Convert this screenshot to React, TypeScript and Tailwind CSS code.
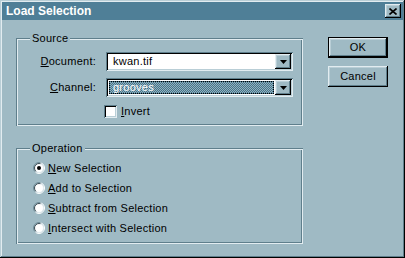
import React from 'react';

const raised =
  'shadow-[inset_-1px_-1px_0_#000,inset_1px_1px_0_#e2ecf0,inset_-2px_-2px_0_#5f7f8c,inset_2px_2px_0_#b9ced6]';
const sunken =
  'shadow-[inset_1px_1px_0_#5f7f8c,inset_-1px_-1px_0_#e2ecf0,inset_2px_2px_0_#000,inset_-2px_-2px_0_#b9ced6]';
const etched =
  'shadow-[inset_1px_1px_0_#5f7f8c,inset_-1px_-1px_0_#e2ecf0,inset_2px_2px_0_#e2ecf0,inset_-2px_-2px_0_#5f7f8c]';

const Group: React.FC<{ label: string; className?: string; children: React.ReactNode }> = ({
  label,
  className,
  children,
}) => (
  <div className={`relative ${etched} ${className ?? ''}`}>
    <span className="absolute left-[14px] -top-[6px] bg-[#9fbac4] px-[2px] leading-[13px]">{label}</span>
    {children}
  </div>
);

const Arrow = () => (
  <div className={`w-[16px] h-full shrink-0 bg-[#9fbac4] ${raised} flex items-center justify-center`}>
    <svg width="7" height="4" viewBox="0 0 7 4">
      <path d="M0 0h7L3.5 4z" fill="#000" />
    </svg>
  </div>
);

const Combo: React.FC<{ value: string; selected?: boolean }> = ({ value, selected }) => (
  <div className={`h-[19px] bg-white ${sunken} flex p-[2px]`}>
    {selected ? (
      <div className="flex-1 p-[1px]">
        <div className="h-full flex items-center pl-[4px] text-white outline-1 outline-dotted outline-black -outline-offset-1 bg-[repeating-conic-gradient(#44748b_0_25%,#93b1bd_0_50%)] bg-[length:2px_2px]">
          {value}
        </div>
      </div>
    ) : (
      <div className="flex-1 flex items-center pl-[5px]">{value}</div>
    )}
    <Arrow />
  </div>
);

const Radio: React.FC<{ checked?: boolean; id: number }> = ({ checked, id }) => (
  <svg width="12" height="12" viewBox="0 0 12 12" className="shrink-0">
    <defs>
      <linearGradient id={`o${id}`} x1="0" y1="0" x2="1" y2="0.6">
        <stop offset="0.4" stopColor="#6e8c98" />
        <stop offset="0.6" stopColor="#ffffff" />
      </linearGradient>
      <linearGradient id={`i${id}`} x1="0" y1="0" x2="1" y2="0.6">
        <stop offset="0.4" stopColor="#3a4a52" />
        <stop offset="0.6" stopColor="#e4eef2" />
      </linearGradient>
    </defs>
    <circle cx="6" cy="6" r="5.5" fill="none" stroke={`url(#o${id})`} />
    <circle cx="6" cy="6" r="4.5" fill="#fff" stroke={`url(#i${id})`} />
    {checked && <circle cx="6" cy="6" r="2" fill="#000" />}
  </svg>
);

const U: React.FC<{ children: React.ReactNode }> = ({ children }) => <span className="underline">{children}</span>;

export default function App() {
  const ops: [React.ReactNode, string][] = [
    [<U key="n">N</U>, 'ew Selection'],
    [<U key="a">A</U>, 'dd to Selection'],
    [<U key="s">S</U>, 'ubtract from Selection'],
    [<U key="i">I</U>, 'ntersect with Selection'],
  ];

  return (
    <div className="w-[405px] h-[258px] bg-[#9fbac4] p-[2px] text-[11px] leading-[13px] text-black font-['Liberation_Sans',Arial,sans-serif] shadow-[inset_-1px_-1px_0_#000,inset_1px_1px_0_#b9ced6,inset_-2px_-2px_0_#5f7f8c,inset_2px_2px_0_#e2ecf0]">
      <div className="h-[18px] bg-[#4f7f97] flex items-center justify-between pl-[4px] pr-[2px]">
        <span className="text-white font-bold text-[12px]">Load Selection</span>
        <div className={`w-[16px] h-[14px] bg-[#9fbac4] ${raised} flex items-center justify-center`}>
          <svg width="8" height="7" viewBox="0 0 8 7">
            <path d="M0.5 0.5l7 6M7.5 0.5l-7 6" stroke="#000" strokeWidth="1.6" />
          </svg>
        </div>
      </div>

      <div className="flex items-start pl-[14px] gap-[25px] tracking-[0.25px]">
        <div className="w-[287px] pt-[18px] flex flex-col gap-[22px]">
          <Group label="Source" className="h-[88px] pt-[14px]">
            <div className="grid grid-cols-[74px_187px] gap-x-[10px] gap-y-[7px] pl-[6px] items-center">
              <span className="text-right">
                <U>D</U>ocument:
              </span>
              <Combo value="kwan.tif" />
              <span className="text-right">
                <U>C</U>hannel:
              </span>
              <Combo value="grooves" selected />
            </div>
            <div className="flex items-center pl-[88px] mt-[8px] gap-[4px]">
              <div className={`w-[13px] h-[13px] bg-white ${sunken}`} />
              <span>
                <U>I</U>nvert
              </span>
            </div>
          </Group>

          <Group label="Operation" className="h-[96px] pt-[10px] pl-[17px]">
            {ops.map(([m, rest], i) => (
              <div key={i} className="h-[20px] flex items-center gap-[3px]">
                <Radio id={i} checked={i === 0} />
                <span>
                  {m}
                  {rest}
                </span>
              </div>
            ))}
          </Group>
        </div>

        <div className="w-[60px] pt-[17px] flex flex-col gap-[8px]">
          <div className="h-[21px] border border-black">
            <div className={`h-full ${raised} flex items-center justify-center`}>OK</div>
          </div>
          <div className={`h-[21px] ${raised} flex items-center justify-center`}>Cancel</div>
        </div>
      </div>
    </div>
  );
}
